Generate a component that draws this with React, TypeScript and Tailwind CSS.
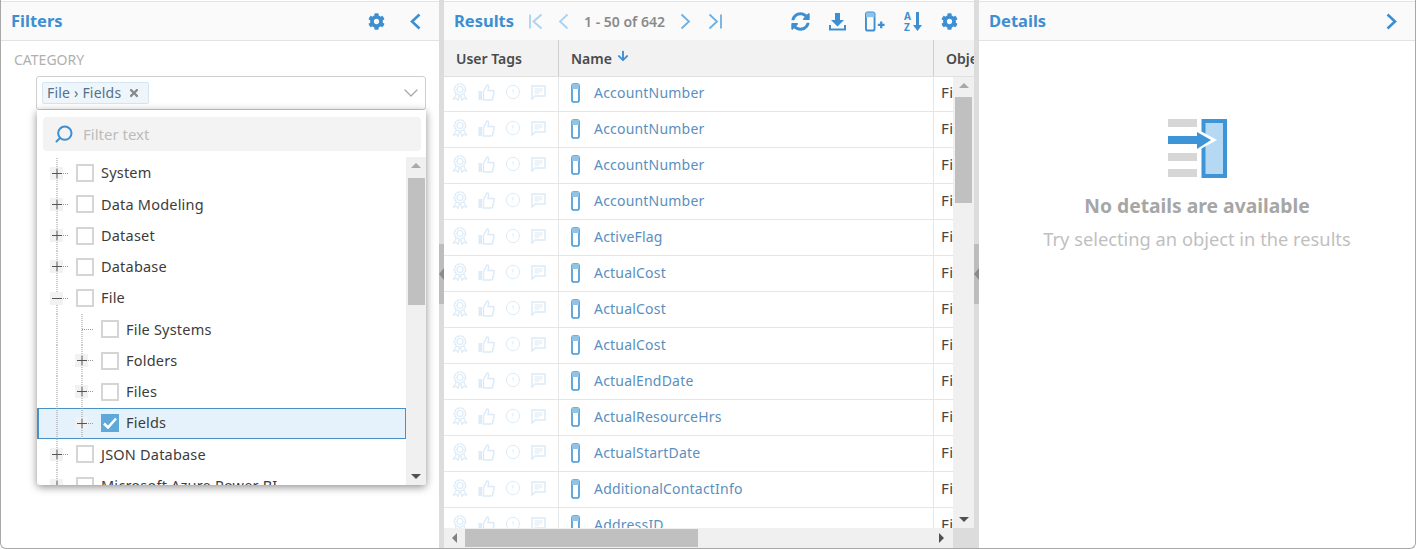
import { ChevronDown, CircleAlert, Search } from 'lucide-react';
import { FaArrowDown, FaCog, FaSyncAlt, FaTimes } from 'react-icons/fa';

const names = [
  'AccountNumber', 'AccountNumber', 'AccountNumber', 'AccountNumber', 'ActiveFlag', 'ActualCost', 'ActualCost',
  'ActualCost', 'ActualEndDate', 'ActualResourceHrs', 'ActualStartDate', 'AdditionalContactInfo', 'AddressID',
];

const tree = [
  { label: 'System', level: 1, mark: '+' },
  { label: 'Data Modeling', level: 1, mark: '+' },
  { label: 'Dataset', level: 1, mark: '+' },
  { label: 'Database', level: 1, mark: '+' },
  { label: 'File', level: 1, mark: '-' },
  { label: 'File Systems', level: 2, mark: '' },
  { label: 'Folders', level: 2, mark: '+' },
  { label: 'Files', level: 2, mark: '+' },
  { label: 'Fields', level: 2, mark: '+', checked: true },
  { label: 'JSON Database', level: 1, mark: '+' },
  { label: 'Microsoft Azure Power BI', level: 1, mark: '+' },
];

const ColumnIcon = ({ size = 20 }: { size?: number }) => (
  <svg width={size * 0.6} height={size} viewBox="0 0 12 20" fill="none">
    <rect x="1" y="1" width="7" height="18" rx="1.5" stroke="#3d94d6" strokeWidth="1.6" />
    <rect x="1" y="1" width="7" height="5" fill="#8fc3ea" />
  </svg>
);

// the four faint user tag icons
const RosetteIcon = () => (
  <svg width="16" height="18" viewBox="0 0 16 18" fill="none" stroke="currentColor" className="shrink-0">
    <circle cx="8" cy="6.500" r="5.500" strokeWidth="1.600" strokeDasharray="2.500 0.600" />
    <circle cx="8" cy="6.500" r="3" strokeWidth="1.200" />
    <path d="M4.500 11 L1.500 16 L4.500 15.500 L6 17.500 L7.500 12.500 M11.500 11 L14.500 16 L11.500 15.500 L10 17.500 L8.500 12.500" strokeWidth="1.200" />
  </svg>
);

const ThumbIcon = () => (
  <svg width="17" height="17" viewBox="0 0 17 17" fill="none" className="shrink-0">
    <rect x="0.500" y="7" width="3.500" height="9" fill="currentColor" />
    <path d="M5.500 7.500 L9 1 C10.500 1 11 2.500 10.500 4 L10 6.500 H15 C16 6.500 16.300 7.500 16 8.500 L14.500 15 C14.300 15.700 14 16 13 16 H5.500 Z" stroke="currentColor" strokeWidth="1.500" />
  </svg>
);

const NoteIcon = () => (
  <svg width="15" height="15" viewBox="0 0 15 15" fill="none" className="shrink-0">
    <path d="M1 1 H14 V11 H4 L1 14 Z" stroke="currentColor" strokeWidth="1.500" />
    <path d="M3.500 4 H11.500 M3.500 6 H11.500 M3.500 8 H8.500" stroke="currentColor" strokeWidth="1.100" />
  </svg>
);

// header chevrons, wider than the lucide ones
const Chevron = ({ dir, w = 11, h = 17, sw = 2.6, bar, className }: { dir: 'left' | 'right'; w?: number; h?: number; sw?: number; bar?: boolean; className?: string }) => {
  const total = bar ? w + 3 : w;
  const d = dir === 'left'
    ? `M${total - 1.5} 1.5 L${bar ? 4.5 : 2} ${h / 2} L${total - 1.5} ${h - 1.5}`
    : `M1.5 1.5 L${w - 2} ${h / 2} L1.5 ${h - 1.5}`;
  return (
    <svg width={total} height={h} viewBox={`0 0 ${total} ${h}`} fill="none" className={`shrink-0 ${className ?? ''}`}>
      <path d={d} stroke="currentColor" strokeWidth={sw} />
      {bar && <line x1={dir === 'left' ? 1 : total - 1} x2={dir === 'left' ? 1 : total - 1} y1="1.500" y2={h - 1.5} stroke="currentColor" strokeWidth={sw} />}
    </svg>
  );
};

// dotted tree guides plus the little +/- box in front of a checkbox
const Guide = ({ level, mark }: { level: number; mark: string }) => {
  const cx = level === 1 ? 20 : 45;
  return (
    <svg width={level === 1 ? 39 : 64} height="31.25" className="shrink-0">
      <line x1="20" x2="20" y1="0" y2="32" stroke="#999" strokeDasharray="1 1" />
      {level === 2 && <line x1="45" x2="45" y1="0" y2="32" stroke="#999" strokeDasharray="1 1" />}
      <line x1={cx} x2={cx + 11} y1="15.5" y2="15.5" stroke="#999" strokeDasharray="1 1" />
      {mark && <rect x={cx - 7} y="9" width="13" height="13" fill="#f2f2f2" />}
      {mark && <line x1={cx - 5} x2={cx + 5} y1="15.5" y2="15.5" stroke="#555" />}
      {mark === '+' && <line x1={cx} x2={cx} y1="10.5" y2="20.5" stroke="#555" />}
    </svg>
  );
};

const TreeRow = ({ label, level, mark, checked }: { label: string; level: number; mark: string; checked?: boolean }) => (
  <div className={`flex items-center h-[31.25px] shrink-0 ${checked ? 'bg-[#e5f2fb] shadow-[inset_0_0_0_1px_#4a90c8,inset_2px_0_0_0_#4a90c8]' : ''}`}>
    <Guide level={level} mark={mark} />
    {checked ? (
      <span className="w-[18px] h-[18px] bg-[#5fa9da] shrink-0 flex items-center justify-center">
        <svg width="14" height="12" viewBox="0 0 14 12" fill="none">
          <path d="M1 6.5 L5 10.5 L13 1.5" stroke="#fff" strokeWidth="2.6" />
        </svg>
      </span>
    ) : (
      <span className="w-[18px] h-[18px] border-2 border-[#d5d5d5] bg-white shrink-0" />
    )}
    <span className="ml-[7px] text-[#3c3c3c] text-[14.5px] tracking-[0.2px] whitespace-nowrap">{label}</span>
  </div>
);

const Splitter = () => (
  <div className="w-[5px] shrink-0 bg-[#dcdcdc] flex items-center">
    <div className="w-[5px] h-[60px] bg-[#bdbdbd] flex items-center justify-center">
      <span className="border-y-[6px] border-y-transparent border-r-[5px] border-r-[#8a8a8a]" />
    </div>
  </div>
);

const ResultRow = ({ name }: { name: string }) => (
  <div className="flex h-[36px] shrink-0 border-b border-[#e6e6e6]">
    <div className="w-[115px] shrink-0 border-r border-[#e6e6e6] flex items-center pb-[3px] pl-[8px] gap-[10px] text-[#dcebf7]">
      <RosetteIcon />
      <ThumbIcon />
      <CircleAlert size={16} strokeWidth={1.5} />
      <NoteIcon />
    </div>
    <div className="w-[375px] shrink-0 border-r border-[#e6e6e6] flex items-center pb-[2px] pl-[12px]">
      <ColumnIcon />
      <span className="ml-[11px] text-[#5a8fc0] text-[14px] tracking-[0.2px]">{name}</span>
    </div>
    <div className="pl-[7px] pb-[2px] flex items-center text-[#444] text-[15px] tracking-[0.5px]">File</div>
  </div>
);

const TopIcon = ({ children }: { children: React.ReactNode }) => (
  <span className="flex items-center justify-center text-[#3d8fd1]">{children}</span>
);

export default function App() {
  return (
    <div
      className="w-[1416px] h-[549px] flex overflow-hidden bg-white border-l border-b border-r border-[#a8a8a8] rounded-bl-md rounded-br-md"
      style={{ fontFamily: '"Noto Sans", sans-serif' }}
    >
      {/* Filters */}
      <section className="w-[438px] shrink-0 flex flex-col">
        <header className="h-[40px] shrink-0 mt-px border-t border-b border-[#e3e3e3] bg-[#fafafa] flex items-center pl-[10px] pr-[18px]">
          <h2 className="text-[#3d8fd1] text-[16.5px] font-bold">Filters</h2>
          <div className="ml-auto flex items-center gap-[25px]">
            <TopIcon><FaCog size={17} /></TopIcon>
            <TopIcon><Chevron dir="left" /></TopIcon>
          </div>
        </header>
        <div className="relative flex-1 pl-[35px] pr-[13px] pt-[10px]">
          <div className="-ml-[22px] text-[#b0b0b0] text-[14px] leading-[18px]">CATEGORY</div>
          <div className="mt-[7px] h-[34px] border border-[#cfcfcf] rounded-[3px] flex items-center pl-[5px] pr-[2px]">
            <span className="h-[22px] bg-[#eef6fc] border border-[#d4e6f4] rounded-[2px] flex items-center pl-[4px] pr-[8px] pb-[1px] text-[#55708c] text-[14px] tracking-[0.2px]">
              File › Fields
              <FaTimes size={12} className="ml-[7px] text-[#888]" />
            </span>
            <ChevronDown size={24} strokeWidth={1.3} className="ml-auto text-[#a8a8a8]" />
          </div>

          {/* Open category dropdown */}
          <div className="absolute left-[36px] top-[69px] w-[389px] h-[375px] bg-white rounded-b-[3px] shadow-[0_2px_8px_rgba(0,0,0,0.45)] flex flex-col overflow-hidden">
            <div className="mx-[6px] mt-[7px] h-[34px] shrink-0 bg-[#f3f3f3] rounded-[4px] flex items-center pl-[11px] w-[378px]">
              <Search size={20} strokeWidth={2.4} className="text-[#3d8fd1] -scale-x-100" />
              <span className="ml-[9px] text-[#bcbcbc] text-[15px]">Filter text</span>
            </div>
            <div className="flex-1 flex mt-[6px] min-h-0">
              <div className="flex-1 pt-[0.6px] flex flex-col overflow-hidden">
                {tree.map((t) => (
                  <TreeRow key={t.label} {...t} />
                ))}
              </div>
              <div className="w-[20px] shrink-0 bg-[#f0f0f0] flex flex-col items-center pt-[6px]">
                <span className="border-x-[5px] border-x-transparent border-b-[5px] border-b-[#a8a8a8]" />
                <div className="mt-[10px] w-[17px] h-[127px] bg-[#c0c0c0]" />
                <span className="mt-auto mb-[6px] border-x-[5px] border-x-transparent border-t-[5px] border-t-[#505050]" />
              </div>
            </div>
          </div>
        </div>
      </section>

      <Splitter />

      {/* Results */}
      <section className="w-[530px] shrink-0 flex flex-col">
        <header className="h-[39px] shrink-0 mt-px border-t border-[#e3e3e3] bg-[#fafafa] flex items-center pl-[10px] pr-[16px]">
          <h2 className="w-[58px] text-[#3d8fd1] text-[16.5px] font-bold whitespace-nowrap">Results</h2>
          <Chevron dir="left" bar sw={1.8} className="ml-[17px] text-[#a9d2ee]" />
          <Chevron dir="left" sw={1.8} className="ml-[15px] text-[#a9d2ee]" />
          <span className="ml-[15px] text-[#8a8a8a] text-[14px] font-semibold whitespace-nowrap">1 - 50 of 642</span>
          <Chevron dir="right" sw={1.8} className="ml-[15px] text-[#6fb0e0]" />
          <Chevron dir="right" bar sw={1.8} className="ml-[17px] text-[#6fb0e0]" />
          <div className="ml-auto flex items-center gap-[18px]">
            <TopIcon><FaSyncAlt size={19} /></TopIcon>
            <TopIcon>
              <svg width="19" height="19" viewBox="0 0 19 19" fill="currentColor">
                <path d="M7 1h5v7h4l-6.500 6.500L3 8h4z" />
                <path d="M1 13h2v3.500h13V13h2v5.500H1z" />
              </svg>
            </TopIcon>
            <TopIcon>
              <svg width="21" height="21" viewBox="0 0 22 21" fill="none">
                <rect x="1" y="1" width="9" height="19" rx="2" stroke="currentColor" strokeWidth="2" />
                <rect x="1" y="1" width="9" height="5" fill="#8fc3ea" />
                <path d="M13.500 14h7M17 10.500v7" stroke="currentColor" strokeWidth="2.400" />
              </svg>
            </TopIcon>
            <TopIcon>
              <svg width="19" height="21" viewBox="0 0 19 21" fill="currentColor">
                <text x="0" y="9" fontSize="10" fontWeight="700" fontFamily="Noto Sans">A</text>
                <text x="0" y="20" fontSize="10" fontWeight="700" fontFamily="Noto Sans">Z</text>
                <path d="M12 1h3v13h3l-4.500 6L9 14h3z" />
              </svg>
            </TopIcon>
            <TopIcon><FaCog size={17} /></TopIcon>
          </div>
        </header>
        <div className="h-[37px] shrink-0 bg-[#f2f2f2] border-b border-[#e0e0e0] flex font-semibold text-[#4a4a4a] text-[14px] overflow-hidden">
          <div className="w-[115px] shrink-0 border-r border-[#cfcfcf] flex items-center pl-[12px]">User Tags</div>
          <div className="w-[375px] shrink-0 border-r border-[#cfcfcf] flex items-center pl-[12px]">
            Name
            <FaArrowDown size={12} className="ml-[5px] -mt-[4px] text-[#3d8fd1]" />
          </div>
          <div className="flex items-center pl-[12px] whitespace-nowrap">Object Type</div>
        </div>
        <div className="flex-1 flex min-h-0">
          <div className="w-[509px] shrink-0 -mt-px flex flex-col overflow-hidden">
            {names.map((n, i) => (
              <ResultRow key={i} name={n} />
            ))}
          </div>
          <div className="flex-1 bg-[#f0f0f0] flex flex-col items-center pt-[6px]">
            <span className="border-x-[5px] border-x-transparent border-b-[5px] border-b-[#a8a8a8]" />
            <div className="mt-[9px] w-[17px] h-[106px] bg-[#c0c0c0]" />
            <span className="mt-auto mb-[6px] border-x-[5px] border-x-transparent border-t-[5px] border-t-[#505050]" />
          </div>
        </div>
        <div className="h-[20px] shrink-0 flex">
          <div className="w-[509px] bg-[#f0f0f0] flex items-center pl-[8px]">
            <span className="border-y-[5px] border-y-transparent border-r-[5px] border-r-[#808080]" />
            <div className="ml-[8px] w-[233px] h-[18px] bg-[#c0c0c0]" />
            <span className="ml-auto mr-[9px] border-y-[5px] border-y-transparent border-l-[5px] border-l-[#505050]" />
          </div>
          <div className="flex-1 bg-[#dcdcdc]" />
        </div>
      </section>

      <Splitter />

      {/* Details */}
      <section className="flex-1 flex flex-col">
        <header className="h-[40px] shrink-0 mt-px border-t border-b border-[#e3e3e3] bg-[#fafafa] flex items-center pl-[10px] pr-[18px]">
          <h2 className="text-[#3d8fd1] text-[16.5px] font-bold">Details</h2>
          <Chevron dir="right" className="ml-auto text-[#3d8fd1]" />
        </header>
        <div className="flex-1 flex flex-col items-center pt-[78px]">
          <svg width="59" height="59" viewBox="0 0 59 59">
            <rect x="0" y="0" width="29" height="8" fill="#d6d6d6" />
            <rect x="0" y="34" width="29" height="8" fill="#d6d6d6" />
            <rect x="0" y="50" width="29" height="8" fill="#d6d6d6" />
            <rect x="33.500" y="0" width="25.500" height="59" fill="#3d94d6" />
            <rect x="37.500" y="4" width="17.500" height="51" fill="#b5d9f2" />
            <path d="M29 10 L49 21 L29 32z" fill="#fff" />
            <rect x="0" y="17" width="29" height="8" fill="#3d94d6" />
            <path d="M29 13 L43 21 L29 30z" fill="#3d94d6" />
          </svg>
          <div className="mt-[15px] text-[#a6a6a6] text-[19.3px] font-bold leading-[26px]">No details are available</div>
          <div className="mt-[8px] text-[#bfbfbf] text-[18.3px] leading-[24px]">Try selecting an object in the results</div>
        </div>
      </section>
    </div>
  );
}
